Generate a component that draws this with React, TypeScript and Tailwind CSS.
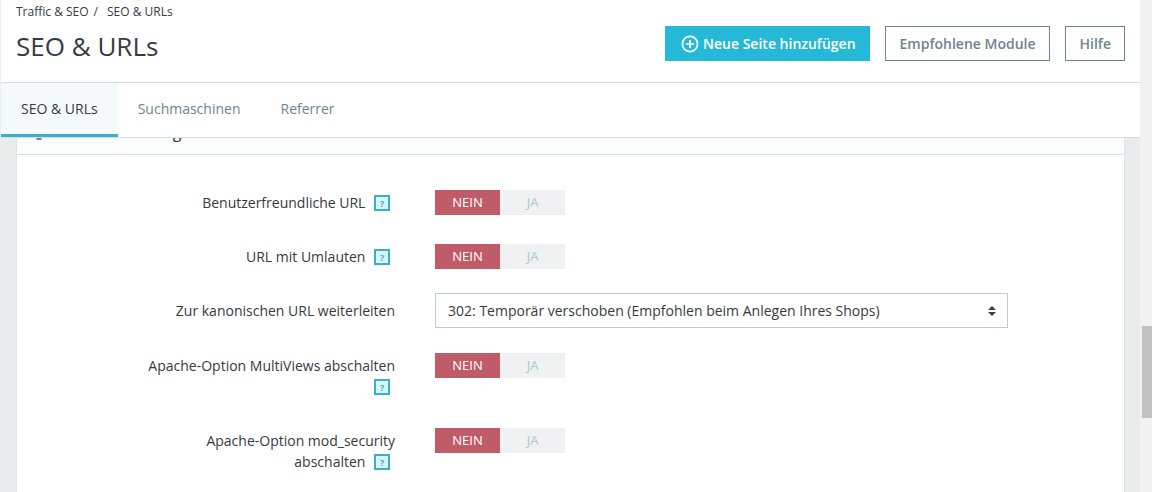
import { useState } from "react";

const TABS = ["SEO & URLs", "Suchmaschinen", "Referrer"];

function HelpBox({ topic }: { topic: string }) {
  return (
    <button
      type="button"
      aria-label={"Hilfe: " + topic}
      className="-mt-px mr-[5px] mb-px ml-[5px] inline-flex h-4 w-4 items-center justify-center border-2 border-[#3dafc2] bg-[#d3f8fd] align-middle text-[9px] leading-none font-bold text-[#58a5c4]"
    >
      ?
    </button>
  );
}

function Toggle({ name, label }: { name: string; label: string }) {
  const [on, setOn] = useState(false);
  return (
    <div role="radiogroup" aria-label={label} className="mt-[5px] flex h-[25px] w-[130px] text-[13px]">
      <label
        className={
          on
            ? "flex flex-1 cursor-pointer items-center justify-center bg-[#eff1f2] text-[#b3c7cd]"
            : "flex flex-1 cursor-pointer items-center justify-center bg-[#c05c67] text-white"
        }
      >
        <input type="radio" name={name} className="sr-only" checked={!on} onChange={() => setOn(false)} />
        NEIN
      </label>
      <label
        className={
          on
            ? "flex flex-1 cursor-pointer items-center justify-center bg-[#72c279] text-white"
            : "flex flex-1 cursor-pointer items-center justify-center bg-[#eff1f2] text-[#b3c7cd]"
        }
      >
        <input type="radio" name={name} className="sr-only" checked={on} onChange={() => setOn(true)} />
        JA
      </label>
    </div>
  );
}

function ToggleRow({ name, label }: { name: string; label: string }) {
  return (
    <div className="grid grid-cols-[252fr_573fr] gap-x-10">
      <div className="pt-[7px] pb-[6px] text-right leading-[21px]">
        {label} <HelpBox topic={label} />
      </div>
      <Toggle name={name} label={label} />
    </div>
  );
}

export default function App() {
  const [tab, setTab] = useState(0);
  return (
    <div className="flex h-screen overflow-hidden border-l border-[#eeeeee] bg-white font-['Open_Sans',sans-serif] text-sm text-[#363a41]">
      <div className="flex min-w-0 flex-1 flex-col">
        <header className="flex h-[83px] shrink-0 justify-between border-b border-[#d9dddf] pr-[15px] pl-[15px]">
          <div>
            <nav aria-label="Brotkrumen" className="flex gap-[9px] pt-1 text-xs leading-4">
              <span className="flex gap-[5px]">
                <a href="#traffic">Traffic &amp; SEO</a>
                <span>/</span>
              </span>
              <a href="#seo">SEO &amp; URLs</a>
            </nav>
            <h1 className="pt-2 text-[26px] leading-9">SEO &amp; URLs</h1>
          </div>
          <div className="flex items-start gap-[15px] pt-[26px] font-semibold text-[#6c868e]">
            <button type="button" className="flex h-[35px] items-center gap-1 bg-[#25b9d7] pr-[14px] pl-4 text-white">
              <svg viewBox="0 0 18 18" className="h-[18px] w-[18px]" fill="none" stroke="currentColor" strokeWidth="1.7">
                <circle cx="9" cy="9" r="7.6" />
                <path d="M9 5v8M5 9h8" />
              </svg>
              Neue Seite hinzufügen
            </button>
            <button type="button" className="h-[35px] border border-[#6c868e] pr-[13px] pl-[14px]">
              Empfohlene Module
            </button>
            <button type="button" className="h-[35px] border border-[#6c868e] pr-[13px] pl-[14px]">
              Hilfe
            </button>
          </div>
        </header>

        <nav aria-label="Bereiche" className="flex h-[55px] shrink-0 border-b border-[#d9dddf]">
          {TABS.map((t, i) => (
            <button
              key={t}
              type="button"
              onClick={() => setTab(i)}
              className={
                i === tab
                  ? "border-b-3 border-[#3dafc8] bg-[#f4f9fb] px-5"
                  : "border-b-3 border-transparent px-5 text-[#6c868e]"
              }
            >
              {t}
            </button>
          ))}
        </nav>

        <main className="min-h-0 flex-1 overflow-hidden bg-[#e9ebec] pr-[15px] pl-[15px]">
          <section className="min-h-full border-x border-[#dfe3e5] bg-white">
            <div className="flex h-[17px] items-end overflow-hidden border-b border-[#d9dfe1] bg-[#fafbfc]">
              <h2 className="flex items-center gap-[18px] pb-[10px] pl-[14px] text-base leading-6">
                <svg viewBox="0 0 16 16" className="h-4 w-4 fill-[#6c868e]">
                  <path d="M5.500 0h5v2.300l1 .8 2-.9 1.800 3-1.800 1.300v3l1.800 1.300-1.800 3-2-.9-1 .8V16h-5v-2.300l-1-.8-2 .9-1.800-3 1.800-1.300v-3L.7 5.200l1.800-3 2 .9 1-.8zM8 5.500a2.500 2.500 0 1 0 0 5 2.500 2.500 0 0 0 0-5z" />
                </svg>
                URL-Einstellungen
              </h2>
            </div>

            <form className="flex flex-col gap-5 pt-[30px] pr-[10.5%] pb-8 pl-[11.400%]">
              <ToggleRow name="friendly" label="Benutzerfreundliche URL" />
              <ToggleRow name="accented" label="URL mit Umlauten" />
              <div className="grid grid-cols-[252fr_573fr] gap-x-10">
                <label htmlFor="canonical" className="py-[7px] text-right leading-[21px]">
                  Zur kanonischen URL weiterleiten
                </label>
                <div className="grid">
                  <select
                    id="canonical"
                    className="col-start-1 row-start-1 h-[35px] w-full appearance-none border border-[#bbcdd2] bg-white pr-8 pl-3"
                  >
                    <option>302: Temporär verschoben (Empfohlen beim Anlegen Ihres Shops)</option>
                  </select>
                  <svg
                    viewBox="0 0 8 10"
                    className="pointer-events-none col-start-1 row-start-1 mr-3 h-[10px] w-2 self-center justify-self-end fill-[#363a41]"
                  >
                    <path d="M4 0l4 4H0zM4 10L0 6h8z" />
                  </svg>
                </div>
              </div>
              <ToggleRow name="multiviews" label="Apache-Option MultiViews abschalten" />
              <ToggleRow name="modsecurity" label="Apache-Option mod_security abschalten" />
            </form>
          </section>
        </main>
      </div>
      <div className="flex w-3 shrink-0 flex-col bg-[#f1f1f1] pl-[2px]" aria-hidden="true">
        <div className="grow-[326]" />
        <div className="grow-[92] bg-[#c1c1c1]" />
        <div className="grow-[74]" />
      </div>
    </div>
  );
}
